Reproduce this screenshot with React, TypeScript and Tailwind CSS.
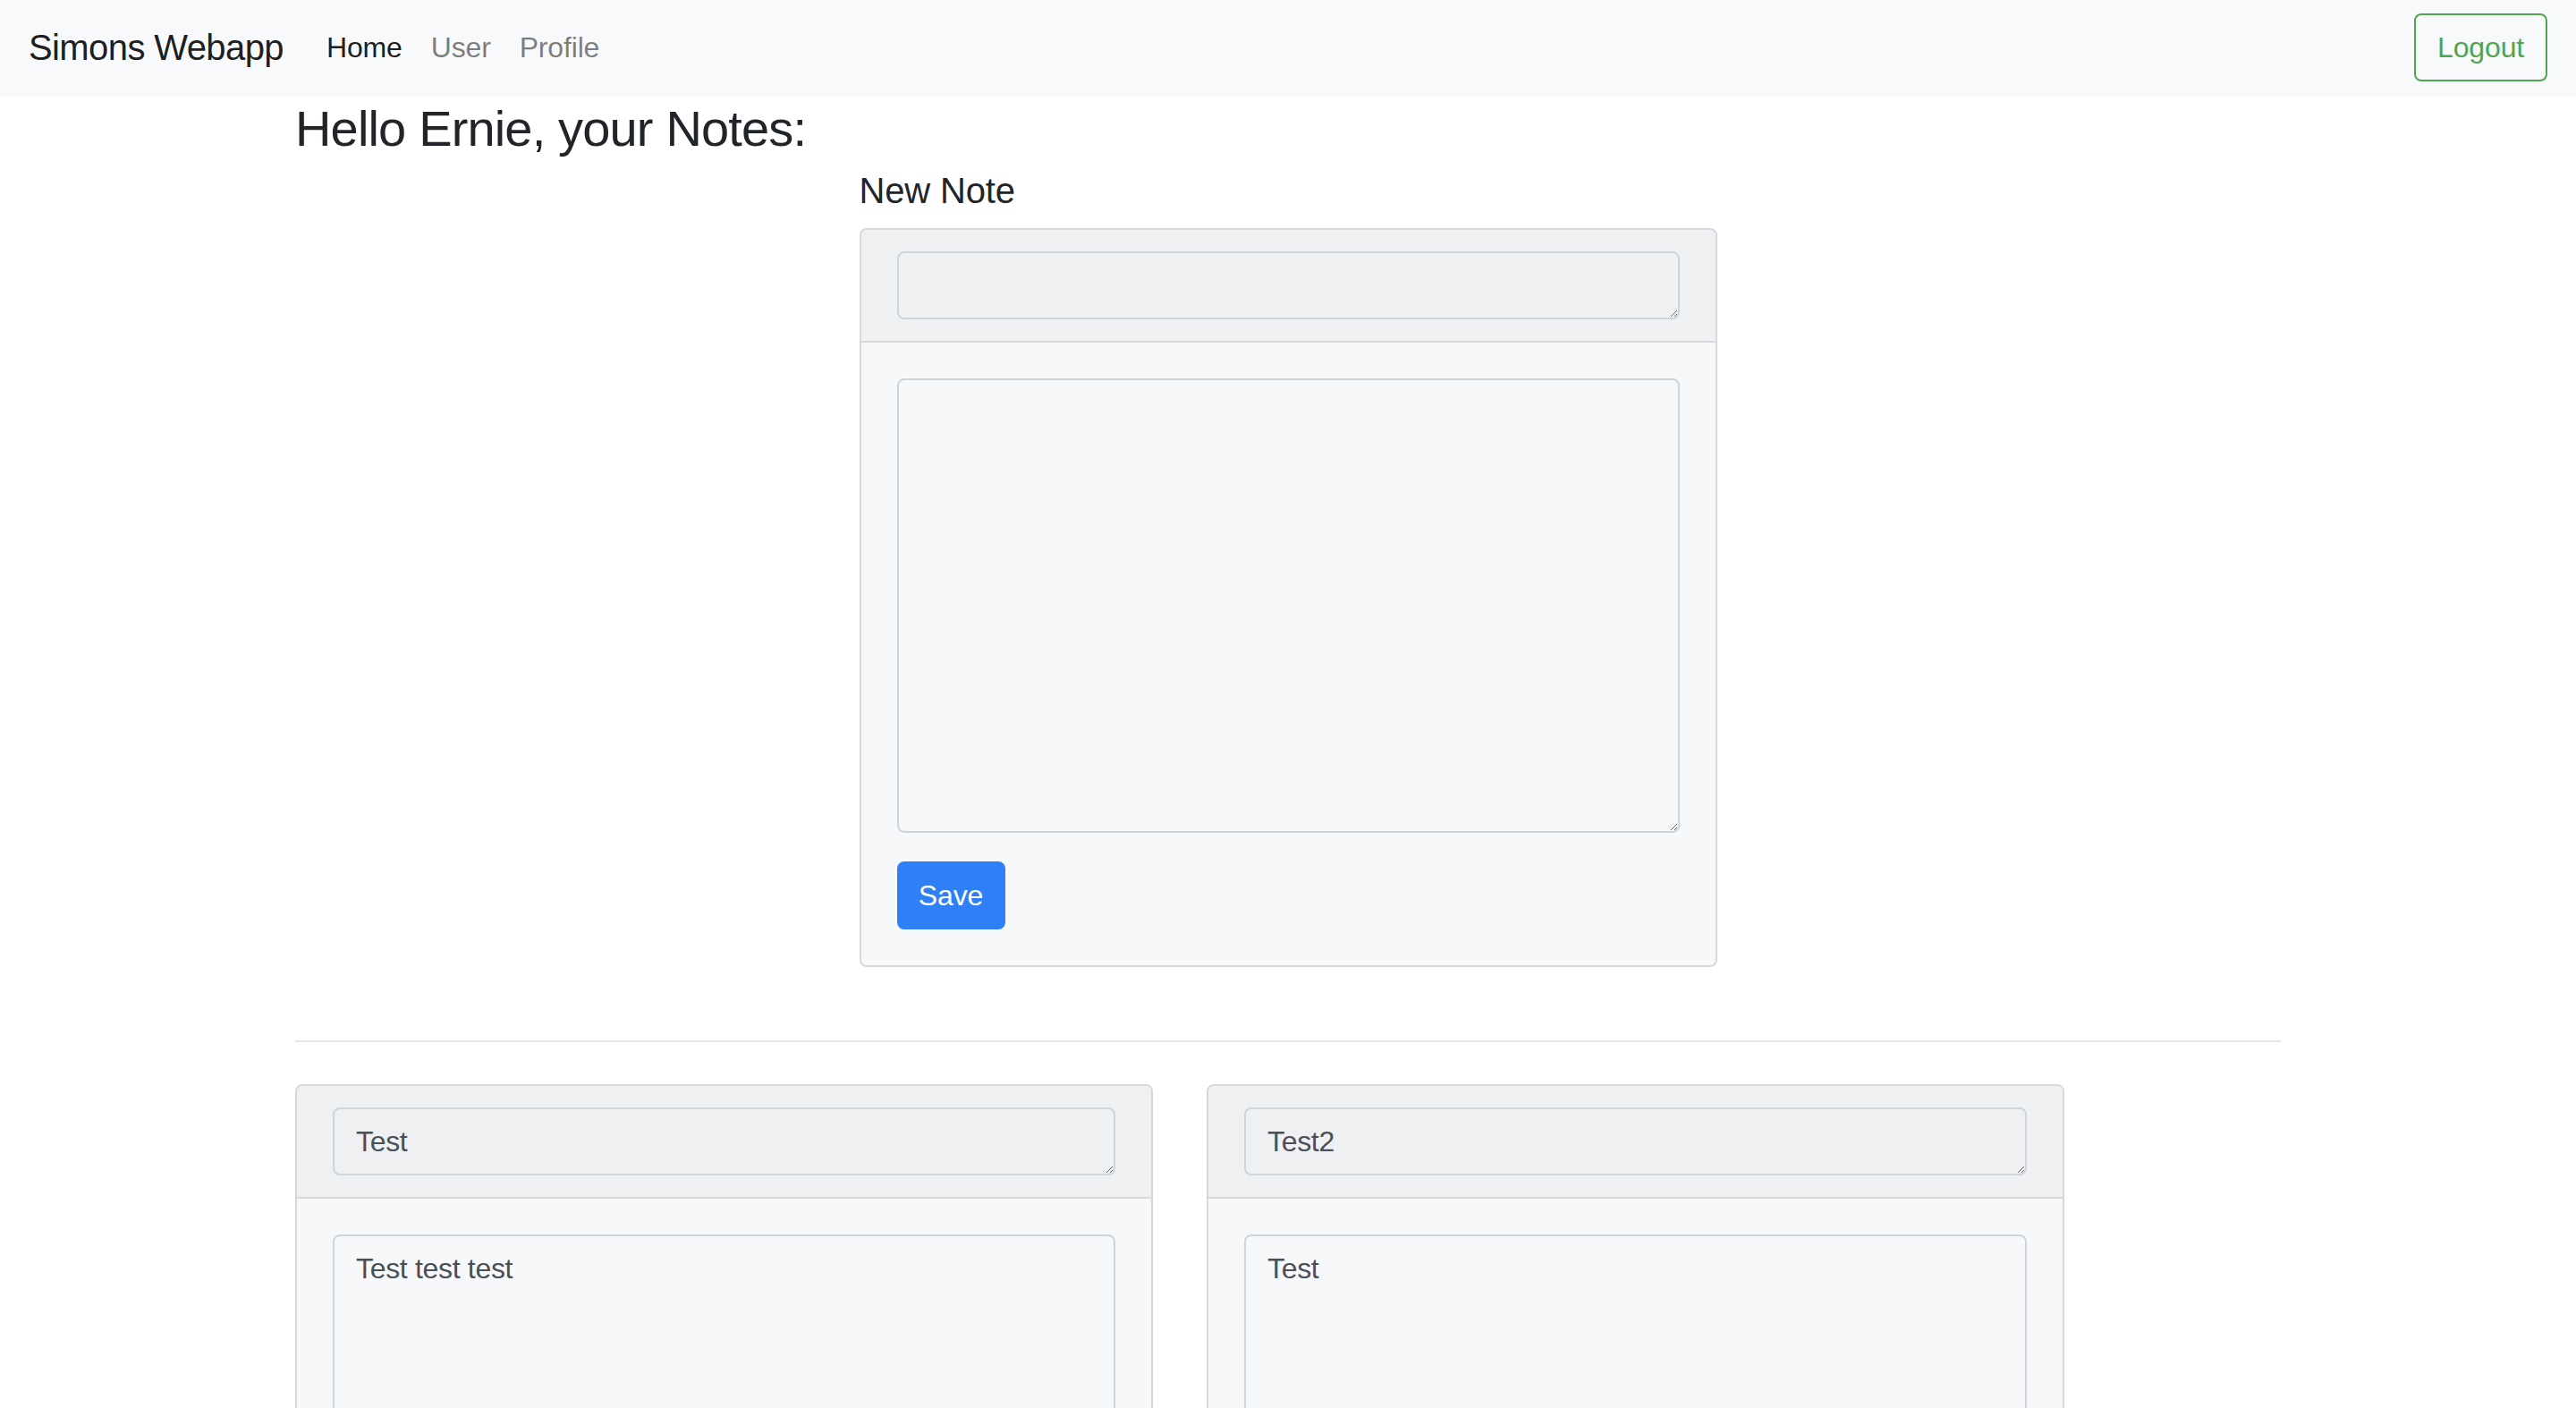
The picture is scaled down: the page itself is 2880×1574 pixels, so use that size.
import React from 'react'

type NoteProps = {
    title?: string
    body?: string
    showSave?: boolean
}

function NoteCard({ title = '', body = '', showSave = false }: NoteProps) {
    return (
        <div className='w-[959px] rounded-[8px] border-2 border-[#d6d8db] bg-[#f7f8f9] overflow-hidden'>
            <div className='bg-[#eff0f2] px-10 py-6 border-b-2 border-[#d6d8db]'>
                <textarea
                    rows={1}
                    defaultValue={title}
                    className='block w-full h-[76px] rounded-[8px] border-2 border-[#ced4da] bg-transparent px-6 py-3 text-[32px] leading-[48px] tracking-[-0.01em] text-[#495057] outline-none'
                />
            </div>
            <div className='p-10'>
                <textarea
                    rows={10}
                    defaultValue={body}
                    className='block w-full h-[508px] rounded-[8px] border-2 border-[#ced4da] bg-transparent px-6 py-3 text-[32px] leading-[48px] tracking-[-0.01em] text-[#495057] outline-none'
                />
                {showSave && (
                    <button className='mt-8 h-[76px] w-[121px] rounded-[8px] bg-[#2f7ff6] text-[32px] leading-[48px] text-white'>
                        Save
                    </button>
                )}
            </div>
        </div>
    )
}

function App() {
    return (
        <div className="min-h-screen bg-white font-['Liberation_Sans',Arial,sans-serif] tracking-[-0.01em] text-[#212529]">
            {/* Navbar */}
            <nav className='h-[108px] bg-[#f8f9fa] flex items-center px-8 pb-0.5'>
                <span className='mr-8 text-[40px] leading-[60px] tracking-[-0.015em] text-black/90'>Simons Webapp</span>
                <ul className='flex text-[32px] leading-[48px]'>
                    <li><a className='px-4 text-black/90'>Home</a></li>
                    <li><a className='px-4 text-black/50'>User</a></li>
                    <li><a className='px-4 text-black/50'>Profile</a></li>
                </ul>
                <button className='ml-auto h-[76px] rounded-[8px] border-2 border-[#4fa64f] px-6 text-[32px] leading-[48px] text-[#4fa64f]'>
                    Logout
                </button>
            </nav>

            {/* Main */}
            <div className='w-[2220px] mx-auto'>
                <h3 className='mt-0.5 mb-3 text-[56px] leading-[67px] font-medium tracking-[-0.015em]'>Hello Ernie, your Notes:</h3>

                <div className='w-[959px] mx-auto'>
                    <h5 className='mb-[18px] text-[40px] leading-[48px] font-medium'>New Note</h5>
                    <NoteCard showSave />
                </div>

                <hr className='mt-[82px] mb-[47px] border-t-2 border-[#e6e6e6]' />

                {/* Notes */}
                <div className='flex gap-[60px]'>
                    <NoteCard title='Test' body='Test test test' />
                    <NoteCard title='Test2' body='Test' />
                </div>
            </div>
        </div>
    )
}

export default App
